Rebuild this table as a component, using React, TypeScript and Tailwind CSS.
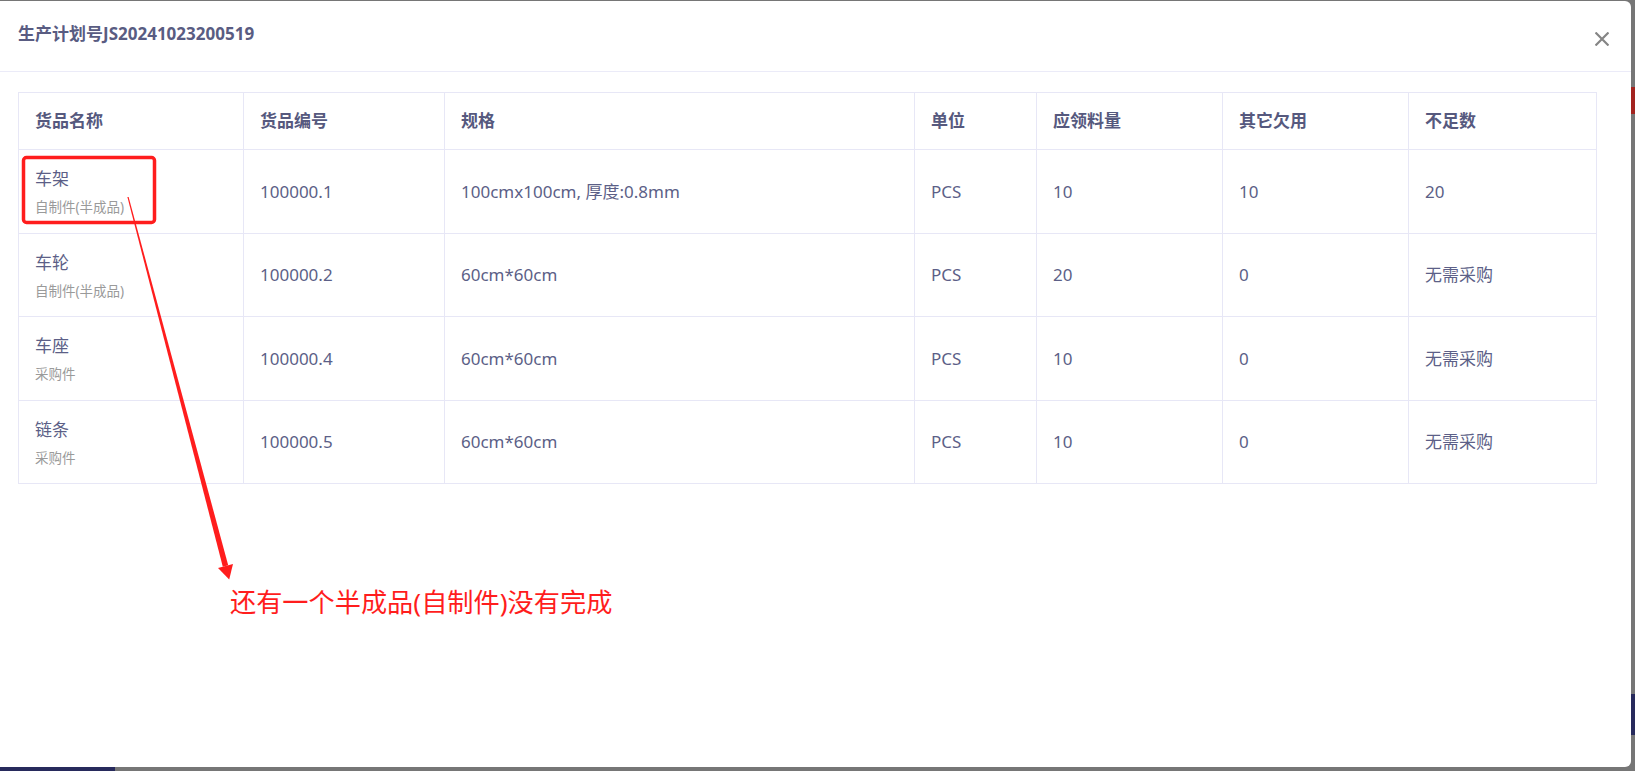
import React from 'react'

type Item = {
  name: string
  kind: string
  code: string
  spec: string
  unit: string
  need: string
  other: string
  lack: string
  rowClass: string
}

const items: Item[] = [
  { name: '车架', kind: '自制件(半成品)', code: '100000.1', spec: '100cmx100cm, 厚度:0.8mm', unit: 'PCS', need: '10', other: '10', lack: '20', rowClass: 'h-[84px]' },
  { name: '车轮', kind: '自制件(半成品)', code: '100000.2', spec: '60cm*60cm', unit: 'PCS', need: '20', other: '0', lack: '无需采购', rowClass: 'h-[83px]' },
  { name: '车座', kind: '采购件', code: '100000.4', spec: '60cm*60cm', unit: 'PCS', need: '10', other: '0', lack: '无需采购', rowClass: 'h-[84px]' },
  { name: '链条', kind: '采购件', code: '100000.5', spec: '60cm*60cm', unit: 'PCS', need: '10', other: '0', lack: '无需采购', rowClass: 'h-[83px]' },
]

const heads = ['货品名称', '货品编号', '规格', '单位', '应领料量', '其它欠用', '不足数']
const widths = [225, 201, 470, 122, 186, 186, 188]

const font = { fontFamily: '"Noto Sans", "Noto Sans CJK SC", sans-serif' }

// ── Annotation overlay (red box + arrow) ─────────────────────────────────────

function Annotation() {
  return (
    <svg className="pointer-events-none absolute left-0 top-[-1px]" width="400" height="620" viewBox="0 0 400 620">
      <rect x="23.5" y="157.5" width="131" height="65" rx="3" fill="none" stroke="#ff1d1d" strokeWidth="3.5" />
      <polygon points="127.4,197.1 128.6,196.9 228.2,565.3 222.8,566.7" fill="#ff1d1d" />
      <polygon points="218,568 233,564 229.2,579.5" fill="#ff1d1d" />
    </svg>
  )
}

export default function App() {
  return (
    <div className="relative h-[771px] w-[1635px] overflow-hidden bg-[#767676]" style={font}>
      {/* page behind the dialog */}
      <div className="absolute right-0 top-[87px] h-[27px] w-[5px] bg-[#a3231f]" />
      <div className="absolute right-0 top-[694px] h-[41px] w-[5px] bg-[#272a5c]" />
      <div className="absolute bottom-0 left-0 h-[4px] w-[115px] bg-[#272a5c]" />

      <div className="relative mt-px h-[766px] w-[1631px] rounded-r-[6px] bg-white">
        <div className="flex h-[71px] items-start justify-between border-b border-[#ebebf8] pl-[18px] pr-[22px] pt-[23px]">
          <h2 className="text-[17px] font-bold leading-[20px] text-[#595c82]">生产计划号JS20241023200519</h2>
          <svg width="14" height="14" viewBox="0 0 14 14" className="mt-[8px]">
            <path d="M0.5 0.5 L13.5 13.5 M13.5 0.5 L0.5 13.5" stroke="#858585" strokeWidth="2.2" />
          </svg>
        </div>

        <div className="pl-[18px] pt-[20px]">
          <table className="w-[1578px] table-fixed border-collapse">
            <colgroup>
              {widths.map((w, i) => (
                <col key={i} style={{ width: w }} />
              ))}
            </colgroup>
            <thead>
              <tr className="h-[57px]">
                {heads.map((h) => (
                  <th key={h} className="border border-[#e7e7f6] px-4 text-left text-[17px] font-bold text-[#56597e]">
                    {h}
                  </th>
                ))}
              </tr>
            </thead>
            <tbody>
              {items.map((it) => (
                <tr key={it.code} className={`${it.rowClass} text-[17px] text-[#5c5f87]`}>
                  <td className="border border-[#e7e7f6] px-4 align-top pt-[17px]">
                    <div className="leading-[24px]">{it.name}</div>
                    <div className="mt-[7px] text-[13.5px] leading-[18px] text-[#9a9a9a]">{it.kind}</div>
                  </td>
                  <td className="border border-[#e7e7f6] px-4">{it.code}</td>
                  <td className="border border-[#e7e7f6] px-4">{it.spec}</td>
                  <td className="border border-[#e7e7f6] px-4">{it.unit}</td>
                  <td className="border border-[#e7e7f6] px-4">{it.need}</td>
                  <td className="border border-[#e7e7f6] px-4">{it.other}</td>
                  <td className="border border-[#e7e7f6] px-4">{it.lack}</td>
                </tr>
              ))}
            </tbody>
          </table>

          <p className="ml-[212px] mt-[100px] text-[26.2px] leading-[36px] text-[#ff1d1d]">还有一个半成品(自制件)没有完成</p>
        </div>

        <Annotation />
      </div>
    </div>
  )
}
